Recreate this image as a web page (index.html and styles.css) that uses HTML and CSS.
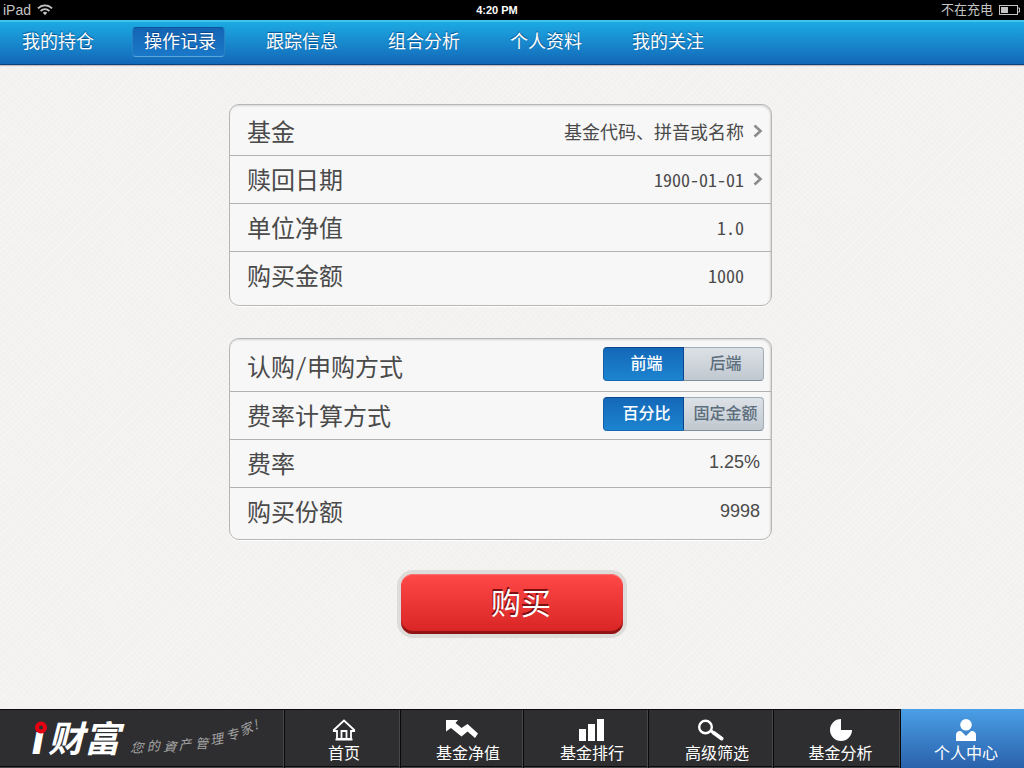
FILE: index.html
```html
<!DOCTYPE html>
<html lang="zh-CN">
<head>
<meta charset="utf-8">
<meta name="viewport" content="width=device-width, initial-scale=1">
<title>i财富</title>
<link rel="stylesheet" href="styles.css">
</head>
<body>
<div class="status">
  <div class="status-side">
    <span class="device">iPad</span>
    <svg class="wifi" width="16" height="12" viewBox="0 0 16 12" fill="none" stroke="#c4c4c4" stroke-width="1.9" aria-hidden="true">
      <path d="M1 4.4C5 .3 11 .3 15 4.4"/><path d="M3.6 7.1c2.5-2.6 6.3-2.6 8.8 0"/><path d="M5.8 8.7c1.2-1.2 3.2-1.2 4.4 0L8 11.3z" fill="#c4c4c4" stroke="none"/>
    </svg>
  </div>
  <time class="clock">4:20 PM</time>
  <div class="status-side status-right">
    <span>不在充电</span>
    <svg width="22" height="10" viewBox="0 0 22 10" aria-hidden="true"><rect x=".5" y=".5" width="18" height="9" fill="none" stroke="#c4c4c4"/><path d="M19 3h1.5v4H19" fill="none" stroke="#c4c4c4"/><rect x="2" y="2" width="7" height="6" fill="#c4c4c4"/></svg>
  </div>
</div>

<nav class="tabs">
  <a class="tab" href="#">我的持仓</a>
  <a class="tab tab-active" href="#" aria-current="page">操作记录</a>
  <a class="tab" href="#">跟踪信息</a>
  <a class="tab" href="#">组合分析</a>
  <a class="tab" href="#">个人资料</a>
  <a class="tab" href="#">我的关注</a>
</nav>

<main class="page">
  <form class="form">
    <div class="card">
      <div class="row">
        <label class="label" for="fund">基金</label>
        <button class="picker" id="fund" type="button">基金代码、拼音或名称
          <svg width="10" height="14" viewBox="0 0 10 14" fill="none" stroke="#8c8c8c" stroke-width="2.6" aria-hidden="true"><path d="M1.5 1.5L7.5 7l-6 5.5"/></svg>
        </button>
      </div>
      <div class="row">
        <label class="label" for="date">赎回日期</label>
        <button class="picker" id="date" type="button">1900-01-01
          <svg width="10" height="14" viewBox="0 0 10 14" fill="none" stroke="#8c8c8c" stroke-width="2.6" aria-hidden="true"><path d="M1.5 1.5L7.5 7l-6 5.5"/></svg>
        </button>
      </div>
      <div class="row">
        <label class="label" for="nav">单位净值</label>
        <input class="value" id="nav" type="text" value="1.0">
      </div>
      <div class="row">
        <label class="label" for="amount">购买金额</label>
        <input class="value" id="amount" type="text" value="1000">
      </div>
    </div>

    <div class="card card-fees">
      <div class="row row-tall" role="radiogroup" aria-labelledby="way">
        <span class="label" id="way">认购/申购方式</span>
        <div class="segments">
          <input type="radio" name="way" id="front" checked><label class="segment" for="front">前端</label>
          <input type="radio" name="way" id="back"><label class="segment" for="back">后端</label>
        </div>
      </div>
      <div class="row" role="radiogroup" aria-labelledby="calc">
        <span class="label" id="calc">费率计算方式</span>
        <div class="segments">
          <input type="radio" name="calc" id="percent" checked><label class="segment" for="percent">百分比</label>
          <input type="radio" name="calc" id="fixed"><label class="segment" for="fixed">固定金额</label>
        </div>
      </div>
      <div class="row">
        <label class="label" for="rate">费率</label>
        <input class="value value-plain" id="rate" type="text" value="1.25%">
      </div>
      <div class="row">
        <label class="label" for="shares">购买份额</label>
        <input class="value value-plain" id="shares" type="text" value="9998">
      </div>
    </div>

    <button class="buy" type="button">购买</button>
  </form>
</main>

<footer class="dock">
  <div class="brand">
    <svg width="284" height="57" viewBox="0 0 284 57" role="img" aria-label="i财富 您的資产管理专家!">
      <text class="brand-i" x="33" y="43">i</text>
      <circle cx="41" cy="17.5" r="5.8" fill="#2e2e30"/>
      <circle cx="41" cy="17.5" r="4" fill="#2e2e30" stroke="#e60012" stroke-width="4"/>
      <text class="brand-name" x="48" y="42">财富</text>
      <text class="slogan" x="130 147 163 179 195 211 227 242 255" y="42 41 41 40 38 35 31 26 20" rotate="4 -2 4 -6 2 -10 -14 -24 -20">您的資产管理专家!</text>
    </svg>
  </div>
  <a class="dock-item" href="#">
    <svg width="24" height="22" viewBox="0 0 24 22" fill="none" stroke="#fff" stroke-width="1.8" aria-hidden="true"><path d="M4.5 12H1.8v-1L12 1.5 22.2 11v1h-2.7M5 11v9h14v-9M9.5 20v-8h5v8M3.5 20.5h17"/></svg>
    <span>首页</span>
  </a>
  <a class="dock-item shifted" href="#">
    <svg class="icon-left" width="32" height="22" viewBox="0 0 32 22" fill="#fff" aria-hidden="true"><path d="M0 1h12L9.5 4l6 5L21.5 5 32 14.5 29 19l-7.500-6.500L15.500 17.500 5 9 0 12.500z"/></svg>
    <span>基金净值</span>
  </a>
  <a class="dock-item shifted" href="#">
    <svg width="26" height="22" viewBox="0 0 26 22" fill="#fff" aria-hidden="true"><path d="M0 10h7v12H0zM9 5h7v17H9zM18 0h7v22h-7z"/></svg>
    <span>基金排行</span>
  </a>
  <a class="dock-item shifted" href="#">
    <svg class="icon-left" width="28" height="22" viewBox="0 0 28 22" fill="none" stroke="#fff" aria-hidden="true"><circle cx="8.5" cy="8" r="6.3" stroke-width="2.4"/><path d="M13.5 11.5l4 3" stroke-width="3"/><path d="M17 14l7.5 5.5" stroke-width="4" stroke-linecap="round"/></svg>
    <span>高级筛选</span>
  </a>
  <a class="dock-item nudged" href="#">
    <svg width="22" height="22" viewBox="0 0 22 22" fill="#fff" aria-hidden="true"><path d="M11 0A11 11 0 1 0 22 11H11z"/></svg>
    <span>基金分析</span>
  </a>
  <a class="dock-item nudged dock-active" href="#" aria-current="page">
    <svg width="22" height="22" viewBox="0 0 22 22" fill="#fff" aria-hidden="true"><circle cx="11" cy="5.8" r="5.8"/><path d="M1 22v-6q0-3 3-4 2-.5 3 1l4 4 4-4q1-1.500 3-1 3 1 3 4v6z"/></svg>
    <span>个人中心</span>
  </a>
</footer>
</body>
</html>
```
FILE: styles.css
```css
* { box-sizing: border-box; }

body {
  margin: 0;
  min-height: 100vh;
  display: flex;
  flex-direction: column;
  font-family: "Liberation Sans", "Noto Sans CJK SC", sans-serif;
  color: #4a4a4a;
  background-color: #f3f2f0;
  background-image:
    repeating-linear-gradient(45deg, rgba(0, 0, 0, .006) 0 1px, transparent 1px 4px),
    repeating-linear-gradient(-45deg, rgba(255, 255, 255, .25) 0 1px, transparent 1px 4px);
}

a { color: inherit; text-decoration: none; }
button, input { font: inherit; color: inherit; border: 0; margin: 0; padding: 0; background: none; }

.status {
  height: 20px;
  padding: 0 3px;
  display: grid;
  grid-template-columns: 1fr auto 1fr;
  align-items: center;
  line-height: 18px;
  background: #000;
  color: #c4c4c4;
  font-size: 13px;
}
.status-side { display: flex; align-items: center; gap: 6px; }
.device { font-size: 14px; }
.status-right { justify-content: flex-end; }
.clock { padding-right: 30px; color: #fff; font-size: 11px; font-weight: bold; }

.tabs {
  height: 45px;
  padding: 5px 10px 0;
  display: flex;
  gap: 29px;
  border-top: 2px solid #40c4ee;
  border-bottom: 1px solid #0c3f7c;
  background: linear-gradient(#1caae2, #1367b8);
  box-shadow: 0 1px 1px rgba(0, 0, 0, .2);
}
.tab {
  height: 30px;
  padding: 0 8px 0 11px;
  border: 1px solid transparent;
  border-radius: 4px;
  color: #fff;
  font-size: 18px;
  line-height: 28px;
  text-shadow: 0 -1px 1px rgba(0, 50, 110, .7);
  white-space: nowrap;
}
.tab-active {
  background: linear-gradient(#1465b4, #1a78c8);
  border-color: #0c559c #2c80c4 #5aa6dc;
}

.page { flex: 1; padding-top: 39px; }
.form {
  display: grid;
  grid-template-columns: 229fr 543fr 252fr;
}
.card {
  grid-column: 2;
  padding: 3px 0 5px;
  margin-bottom: 32px;
  border: 1px solid #b6b6b6;
  border-radius: 10px;
  background: #f7f7f7;
  box-shadow: inset -1px 1px 2px rgba(0, 0, 0, .14), 0 1px 0 #fff;
}
.card-fees { padding-top: 0; padding-bottom: 3px; }
.row {
  height: 48px;
  padding-left: 17px;
  display: flex;
  align-items: center;
  justify-content: space-between;
  border-bottom: 1px solid #b2b2b2;
}
.row:last-child { border-bottom: 0; }
.row-tall { height: 53px; }
.label {
  padding-bottom: 2px;
  font-family: "Noto Sans CJK SC", sans-serif;
  font-feature-settings: "hwid";
  font-size: 24px;
  line-height: 44px;
  white-space: nowrap;
}
.row-tall .label { padding: 2px 0 0; }
.picker, .value {
  padding-bottom: 2px;
  font-family: "Noto Sans CJK SC", sans-serif;
  font-feature-settings: "hwid";
  font-size: 18px;
}
.picker { display: flex; align-items: center; gap: 9px; padding-right: 8px; }
.value { flex: 1; min-width: 0; padding-right: 27px; text-align: right; }
.value-plain { font-family: "Liberation Sans", sans-serif; font-feature-settings: normal; padding-right: 11px; }

.segments { display: flex; margin: 0 7px 3px 0; }
.segments input { position: absolute; opacity: 0; }
.segment {
  width: 80px;
  height: 34px;
  padding-left: 4px;
  border: 1px solid #a2acb5;
  border-bottom-color: #82909c;
  background: linear-gradient(#dce1e6, #c0c8d0);
  color: #5c6e7c;
  font-size: 16px;
  font-weight: 500;
  line-height: 32px;
  text-align: center;
}
.segment:first-of-type { width: 81px; padding-left: 6px; border-radius: 4px 0 0 4px; }
.segment:last-of-type { border-radius: 0 4px 4px 0; border-left: 0; }
.segments input:checked + .segment {
  border-color: #0a4690 #0a4690 #1567b0 #1260a8;
  background: linear-gradient(#1468b8, #1c84d0);
  color: #fff;
}

.buy {
  grid-column: 1 / -1;
  justify-self: center;
  width: 222px;
  height: 60px;
  margin-top: 2px;
  padding-left: 18px;
  border-radius: 12px;
  background: linear-gradient(#ff4848, #d82424);
  box-shadow: inset 0 1px 1px #ff7474, inset 0 -3px 1px #8c1414, 0 0 0 4px #dddcda;
  color: #fff;
  font-size: 30px;
  line-height: 60px;
  text-shadow: -1px -2px 0 #7c1010;
}

.dock {
  display: grid;
  grid-template-columns: 285fr 116fr 123fr 125fr 125fr 127fr 123fr;
  height: 59px;
  border-top: 1px solid #0a0a0a;
  background: linear-gradient(#2e2e30 56px, #0a0a0a 56px 57px, #48484a 57px);
  color: #fff;
}
.brand, .dock-item { border-right: 1px solid #080808; box-shadow: inset -1px 0 0 #48484a; min-width: 0; }
.brand svg { display: block; }
.brand-i { font: italic bold 36px "Liberation Sans", sans-serif; fill: #fff; stroke: #fff; stroke-width: 2px; }
.brand-name { font: italic bold 36px "Noto Sans CJK SC", sans-serif; fill: #fff; }
.slogan { font: italic 13px "Noto Sans CJK SC", sans-serif; fill: #a4a4a4; }
.dock-item {
  display: flex;
  flex-direction: column;
  align-items: center;
  padding: 9px 0 0 3px;
  font-size: 16px;
  line-height: 26px;
  white-space: nowrap;
}
.icon-left { margin-right: 12px; }
.shifted { padding-left: 12px; }
.nudged { padding-left: 7px; }
.dock-active {
  margin-top: -1px;
  padding-top: 10px;
  border: 0;
  background: linear-gradient(#4a9fe6, #2a62ac);
  box-shadow: none;
}
```
